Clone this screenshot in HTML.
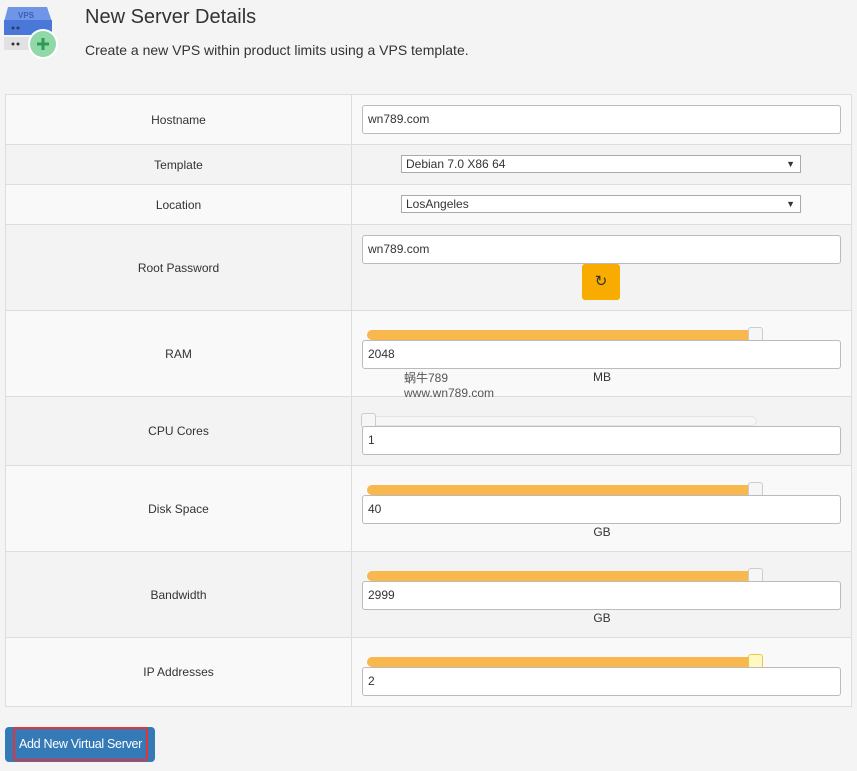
<!DOCTYPE html>
<html style="overflow:hidden;height:771px"><head><meta charset="utf-8"><style>
body{margin:0;width:857px;height:771px;background:#f4f4f4;font-family:"Liberation Sans",Arial,sans-serif;font-size:12px;color:#333;position:relative;overflow:hidden}
.abs{position:absolute}
table{position:absolute;left:5px;top:94px;width:847px;border-collapse:collapse}
td{border:1px solid #ddd;position:relative;padding:0}
td.l{width:345px;text-align:center}
tr:nth-child(odd){background:#f9f9f9}
tr:nth-child(even){background:#f3f3f3}
.in{position:absolute;left:10px;background:#fff;border:1px solid #bbb;border-radius:3px;line-height:27px;padding-left:5px;box-sizing:border-box;width:479px;height:29px}
.sel{position:absolute;left:49px;width:400px;height:18px;background:#fff;border:1px solid #aaa;box-sizing:border-box;line-height:16px;padding-left:4px}
.sel:after{content:"▼";position:absolute;right:5px;font-size:9px}
.tr{position:absolute;left:15px;width:390px;height:10px;border-radius:5px;background:#f8b84e}
.tr.e{background:#f6f6f6;border:1px solid #e3e3e3;box-sizing:border-box}
.h{position:absolute;width:15px;height:15px;border:1px solid #ccc;border-radius:3px;background:#f6f6f6;box-sizing:border-box}
.u{position:absolute;left:240px;width:20px;text-align:center}
</style></head><body>
<svg class="abs" style="left:4px;top:4px" width="56" height="56" viewBox="0 0 56 56">
<path d="M4 3h39l5 15H0z" fill="#6f95e6"/>
<rect x="0" y="16" width="48" height="15" fill="#4a78d8"/>
<text x="14" y="14" font-size="8" font-weight="bold" fill="#3a5fb8" font-family="Liberation Sans">VPS</text>
<circle cx="9" cy="24" r="1.5" fill="#2c3e66"/><circle cx="14" cy="24" r="1.5" fill="#2c3e66"/>
<rect x="0" y="33" width="40" height="13" fill="#e2e2e2"/>
<circle cx="9" cy="40" r="1.5" fill="#333"/><circle cx="14" cy="40" r="1.5" fill="#333"/>
<circle cx="39" cy="40" r="15" fill="#fff"/><circle cx="39" cy="40" r="13" fill="#90d8a8"/>
<path d="M39 34v12M33 40h12" stroke="#2f9a55" stroke-width="3"/>
</svg>
<div class="abs" style="left:85px;top:6px;font-size:20px;color:#333">New Server Details</div>
<div class="abs" style="left:85px;top:42px;font-size:14px">Create a new VPS within product limits using a VPS template.</div>
<table>
<tr style="height:50px"><td class="l">Hostname</td><td><div class="in" style="top:10px">wn789.com</div></td></tr>
<tr style="height:40px"><td class="l">Template</td><td><div class="sel" style="top:10px">Debian 7.0 X86 64</div></td></tr>
<tr style="height:40px"><td class="l">Location</td><td><div class="sel" style="top:10px">LosAngeles</div></td></tr>
<tr style="height:86px"><td class="l">Root Password</td><td><div class="in" style="top:10px">wn789.com</div><div class="abs" style="left:230px;top:39px;width:38px;height:36px;background:#f9ac00;border-radius:3px;text-align:center;line-height:36px;font-size:15px;color:#333">↻</div></td></tr>
<tr style="height:86px"><td class="l">RAM</td><td><div class="tr" style="top:19px"></div><div class="h" style="left:396px;top:16px"></div><div class="in" style="top:29px">2048</div><div class="u" style="top:59px">MB</div><div class="abs" style="left:52px;top:58px;color:#555;font-size:12px">蜗牛789<br>www.wn789.com</div></td></tr>
<tr style="height:69px"><td class="l">CPU Cores</td><td><div class="tr e" style="top:19px"></div><div class="h" style="left:9px;top:16px"></div><div class="in" style="top:29px">1</div></td></tr>
<tr style="height:86px"><td class="l">Disk Space</td><td><div class="tr" style="top:19px"></div><div class="h" style="left:396px;top:16px"></div><div class="in" style="top:29px">40</div><div class="u" style="top:59px">GB</div></td></tr>
<tr style="height:86px"><td class="l">Bandwidth</td><td><div class="tr" style="top:19px"></div><div class="h" style="left:396px;top:16px"></div><div class="in" style="top:29px">2999</div><div class="u" style="top:59px">GB</div></td></tr>
<tr style="height:69px"><td class="l">IP Addresses</td><td><div class="tr" style="top:19px"></div><div class="h" style="left:396px;top:16px;background:#fff8c0;border-color:#e6c94c"></div><div class="in" style="top:29px">2</div></td></tr>
</table>
<div class="abs" style="left:5px;top:727px;width:150px;height:35px;background:#337ab7;border-radius:4px"></div>
<div class="abs" style="left:13px;top:727px;width:135px;height:34px;border:2px solid #e8323a;border-radius:3px;box-sizing:border-box;color:#fff;font-size:12.5px;line-height:30px;text-align:center;white-space:nowrap;letter-spacing:-0.3px">Add New Virtual Server</div>
</body></html>
